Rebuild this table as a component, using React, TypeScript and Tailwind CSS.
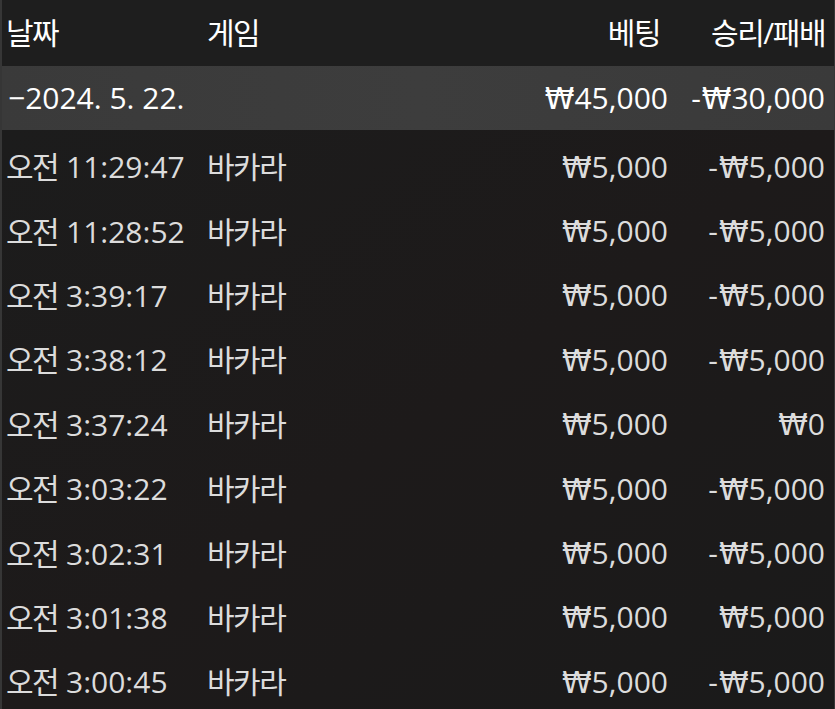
import React from "react";

const rows: [string, string, string, string][] = [
  ["11:29:47", "바카라", "5,000", "-5,000"],
  ["11:28:52", "바카라", "5,000", "-5,000"],
  ["3:39:17", "바카라", "5,000", "-5,000"],
  ["3:38:12", "바카라", "5,000", "-5,000"],
  ["3:37:24", "바카라", "5,000", "0"],
  ["3:03:22", "바카라", "5,000", "-5,000"],
  ["3:02:31", "바카라", "5,000", "-5,000"],
  ["3:01:38", "바카라", "5,000", "5,000"],
  ["3:00:45", "바카라", "5,000", "-5,000"],
];

function Won({ v }: { v: string }) {
  const neg = v.startsWith("-");
  const num = neg ? v.slice(1) : v;
  return (
    <span className="whitespace-nowrap">
      {neg && <span className="mr-[1px]">-</span>}
      <span style={{ fontFamily: '"DejaVu Sans", sans-serif' }} className="font-normal">₩</span>
      {num}
    </span>
  );
}

function Ko({ children }: { children: React.ReactNode }) {
  return <span className="tracking-[-1.5px]">{children}</span>;
}

export default function App() {
  return (
    <div
      className="w-[835px] h-[709px] overflow-hidden bg-[#1b1a1a] border-l-2 border-r border-[#363636] text-[30px] leading-none font-normal"
      style={{ fontFamily: '"Open Sans", "Noto Sans CJK KR", sans-serif' }}
    >
      <div className="h-[66px] bg-[#1e1e1e] text-white grid grid-cols-[201px_1fr_auto_157px] items-center pl-[4px] pr-[9px]">
        <div><Ko>날짜</Ko></div>
        <div><Ko>게임</Ko></div>
        <div className="text-right pr-[8px]"><Ko>베팅</Ko></div>
        <div className="text-right"><Ko>승리/패배</Ko></div>
      </div>
      <div className="h-[64px] bg-gradient-to-r from-[#3a3a3a] via-[#3d3d3d] to-[#3a3a3a] text-white grid grid-cols-[201px_1fr_auto_157px] items-center pl-[4px] pr-[9px]">
        <div className="whitespace-nowrap pl-[2px]">−2024. 5. 22.</div>
        <div></div>
        <div className="text-right"><Won v="45,000" /></div>
        <div className="text-right"><Won v="-30,000" /></div>
      </div>
      <div className="pt-[5px] text-[#dcdcdc] bg-gradient-to-br from-[#1c1c1c] via-[#1d1a1a] to-[#1a1a1a]">
        {rows.map((r, i) => (
          <div
            key={i}
            className="h-[64.4px] grid grid-cols-[201px_1fr_auto_157px] items-center pl-[4px] pr-[9px]"
          >
            <div className="whitespace-nowrap"><Ko>오전</Ko> {r[0]}</div>
            <div><Ko>{r[1]}</Ko></div>
            <div className="text-right"><Won v={r[2]} /></div>
            <div className="text-right"><Won v={r[3]} /></div>
          </div>
        ))}
      </div>
    </div>
  );
}
